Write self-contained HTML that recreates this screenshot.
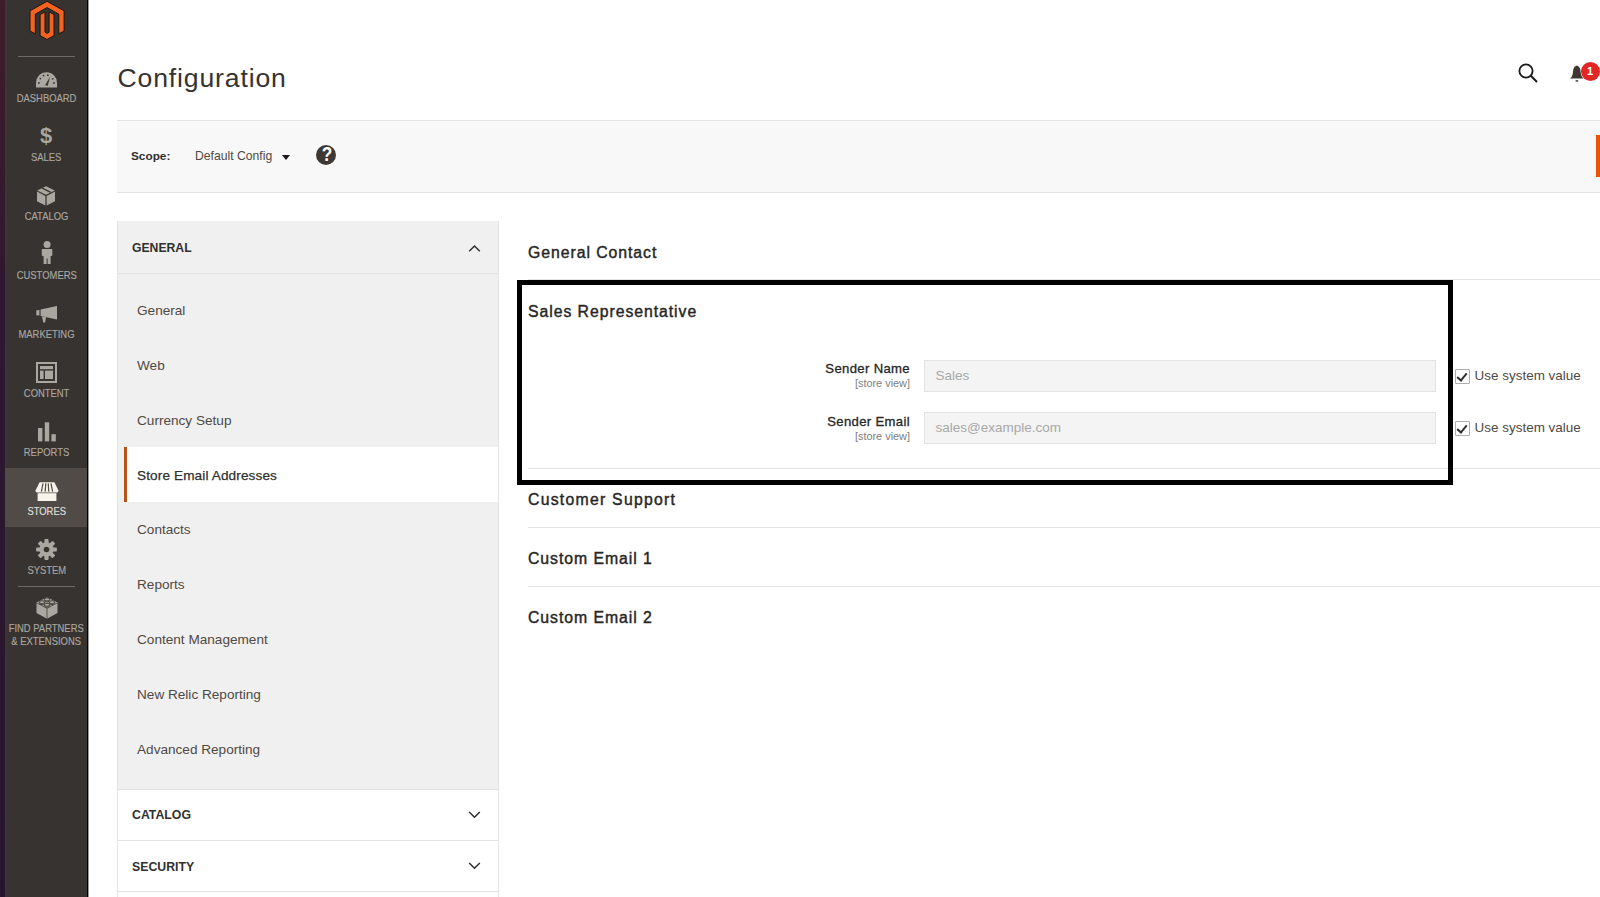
<!DOCTYPE html>
<html><head><meta charset="utf-8">
<style>
*{box-sizing:border-box;margin:0;padding:0}
html,body{width:1600px;height:897px;overflow:hidden;background:#fff;font-family:"Liberation Sans",sans-serif;position:relative}
.a{position:absolute}
.t{position:absolute;white-space:nowrap;line-height:1}
.purple{left:0;top:0;width:4.5px;height:897px;background:linear-gradient(#3f1c2b,#2d1830 35%,#27152c)}
.side{left:4.5px;top:0;width:83px;height:897px;background:#373330}
.edge{left:87px;top:0;width:1px;height:897px;background:#000}
.edge2{left:88px;top:0;width:1px;height:897px;background:#9a9a9a}
.mi{position:absolute;left:4px;width:85px;text-align:center;color:#aaa6a0;font-size:10.6px;line-height:1;white-space:nowrap}.mi span{display:inline-block;transform:scaleX(.89)}
.hl{left:5px;top:468px;width:82px;height:59px;background:#504b46}
.sep{height:1px;background:#6f6a65}
.ic{position:absolute;fill:#aaa6a0}
.nav{left:117px;top:221px;width:382px;height:676px;border-left:1px solid #e3e3e3;border-right:1px solid #e3e3e3}
.navgray{left:118px;top:221px;width:380px;height:568px;background:#f0f0f0}
.hline{height:1px;background:#e3e3e3}
.item{color:#514943;font-size:13.6px}
.sh{color:#262626;font-weight:400;font-size:15.8px;letter-spacing:0.95px;-webkit-text-stroke:0.42px #262626}
.cb{width:15px;height:15px;border:1px solid #adadad;background:#fff;border-radius:1px}
.cb::after{content:"";position:absolute;left:3px;top:1px;width:4px;height:8px;border-right:2px solid #303030;border-bottom:2px solid #303030;transform:rotate(40deg);transform-origin:50% 50%}
.lbl{font-size:13.1px;letter-spacing:0.35px;-webkit-text-stroke:0.3px #262626;color:#262626}
.mi span{-webkit-text-stroke:0.15px #aaa6a0}
</style></head><body>
<div class="a purple"></div>
<div class="a side"></div>
<div class="a" style="left:5px;top:0;width:2px;height:897px;background:#3d3438;opacity:.8"></div>
<div class="a edge"></div>
<div class="a edge2"></div>

<!-- logo -->
<svg class="a" style="left:0;top:0" width="90" height="45" viewBox="0 0 90 45">
<g fill="#f26322" stroke="#1f140e" stroke-width="1" stroke-linejoin="miter">
<path d="M47 1.3 L64.1 10.8 V31 L58.8 33.8 V14.2 L47 7.6 L35.3 14.2 V33.8 L30 31 V10.8 Z"/>
<path d="M40.1 14.6 L45 11.9 V32.2 L47 33.3 L49.1 32.2 V11.9 L54 14.6 V35.6 L47 39.5 L40.1 35.6 Z"/>
</g></svg>
<div class="a sep" style="left:18px;top:56px;width:57px"></div>

<!-- menu -->
<div class="a hl"></div>
<div class="mi" style="top:93.2px"><span>DASHBOARD</span></div>
<div class="mi" style="top:152.2px"><span>SALES</span></div>
<div class="mi" style="top:211.2px"><span>CATALOG</span></div>
<div class="mi" style="top:270.2px"><span>CUSTOMERS</span></div>
<div class="mi" style="top:329.2px"><span>MARKETING</span></div>
<div class="mi" style="top:388.2px"><span>CONTENT</span></div>
<div class="mi" style="top:447.2px"><span>REPORTS</span></div>
<div class="mi" style="top:506.2px;color:#f7f3eb"><span>STORES</span></div>
<div class="mi" style="top:565.2px"><span>SYSTEM</span></div>
<div class="a sep" style="left:18px;top:586px;width:57px"></div>
<div class="mi" style="top:623px"><span>FIND PARTNERS</span></div>
<div class="mi" style="top:635.8px"><span>&amp; EXTENSIONS</span></div>


<!-- sidebar icons -->
<svg class="a" style="left:36px;top:72px" width="21" height="16" viewBox="0.2 0 21.6 16" preserveAspectRatio="none">
<path d="M0.2 15.5 V11 A10.8 10.8 0 0 1 21.8 11 V15.5 Z" fill="#aaa6a0"/>
<g fill="#373330"><circle cx="3.2" cy="11" r="0.9"/><circle cx="4.6" cy="6.6" r="0.9"/><circle cx="8" cy="3.6" r="0.9"/><circle cx="12.4" cy="3.2" r="0.9"/><circle cx="18.7" cy="11" r="0.9"/><circle cx="17.4" cy="6.8" r="0.9"/></g>
<path d="M9.6 13.2 L14.8 4.6 L12.2 13.8 Z" fill="#373330"/>
</svg>
<div class="t" style="left:37px;top:125px;width:18px;text-align:center;font-size:22px;font-weight:700;color:#aaa6a0;line-height:22px">$</div>
<svg class="a" style="left:37px;top:185.5px" width="18" height="20" viewBox="0 0 18 20">
<path d="M9 0.2 L17.8 4.4 L9 8.8 L0.2 4.4 Z" fill="#aaa6a0"/>
<path d="M5.2 2.1 L13.8 6.4" stroke="#373330" stroke-width="1.3"/>
<path d="M0 5.6 L8.4 9.9 V19.6 L0 15.2 Z" fill="#aaa6a0"/>
<path d="M9.6 9.9 L18 5.6 V15.2 L9.6 19.6 Z" fill="#aaa6a0"/>
</svg>
<svg class="a" style="left:41px;top:240px" width="12" height="25" viewBox="0 0 12 25">
<circle cx="6.1" cy="4.4" r="3.5" fill="#aaa6a0"/>
<path d="M1.6 8.9 H10.6 Q11.3 8.9 11.3 9.6 V15.4 L9.6 16.2 V23.9 H6.6 V18.6 H5.6 V23.9 H2.6 V16.2 L0.8 15.4 V9.6 Q0.8 8.9 1.6 8.9 Z" fill="#aaa6a0"/>
</svg>
<svg class="a" style="left:36px;top:306px" width="22" height="17" viewBox="0 0 22 17">
<path d="M0.3 4.5 L3.4 3.8 V9.6 L0.3 9.2 Z" fill="#aaa6a0"/>
<path d="M4.6 3.6 L21 0 V13.4 L4.6 10 Z" fill="#aaa6a0"/>
<path d="M6 10.4 L10 11.2 L9.2 16.6 L7.2 16.4 Z" fill="#aaa6a0"/>
</svg>
<svg class="a" style="left:36px;top:361.5px" width="21" height="21" viewBox="0 0 21 21">
<rect x="1" y="1" width="19" height="19" fill="none" stroke="#aaa6a0" stroke-width="2"/>
<rect x="4" y="4" width="13" height="3.2" fill="#aaa6a0"/>
<rect x="4" y="8.6" width="3.6" height="8.4" fill="#aaa6a0"/>
<rect x="9" y="8.6" width="8" height="8.4" fill="#aaa6a0"/>
</svg>
<svg class="a" style="left:38px;top:421.5px" width="18" height="20" viewBox="0 0 18 20">
<rect x="0" y="6" width="4.4" height="13.4" fill="#aaa6a0"/>
<rect x="6.8" y="0.3" width="4.4" height="19.1" fill="#aaa6a0"/>
<rect x="13.4" y="12.2" width="4.4" height="7.2" fill="#aaa6a0"/>
</svg>
<svg class="a" style="left:34.5px;top:482px" width="24" height="20" viewBox="0 0 24 20">
<path d="M4.6 0.3 H19.4 L23.5 8.4 Q23.5 10.6 21.3 10.6 H2.7 Q0.5 10.6 0.5 8.4 Z" fill="#f7f3eb"/>
<g stroke="#504b46" stroke-width="1.2"><path d="M8 1.4 L6.4 9.6"/><path d="M10.8 1.4 L10.2 9.6"/><path d="M13.2 1.4 L13.8 9.6"/><path d="M16 1.4 L17.6 9.6"/></g>
<rect x="2.6" y="11.2" width="18.8" height="7.8" fill="#f7f3eb"/>
</svg>
<svg class="a" style="left:36px;top:539px" width="21" height="21" viewBox="-10.5 -10.5 21 21">
<g fill="#aaa6a0">
<circle r="7.2"/>
<g id="tooth"><rect x="-2.1" y="-10.4" width="4.2" height="5" rx="0.8"/></g>
<use href="#tooth" transform="rotate(45)"/><use href="#tooth" transform="rotate(90)"/><use href="#tooth" transform="rotate(135)"/>
<use href="#tooth" transform="rotate(180)"/><use href="#tooth" transform="rotate(225)"/><use href="#tooth" transform="rotate(270)"/><use href="#tooth" transform="rotate(315)"/>
</g>
<circle r="2.8" fill="#373330"/>
</svg>
<svg class="a" style="left:35.5px;top:596px" width="22" height="24" viewBox="0 0 22 24">
<path d="M11 1.2 L21.5 6.6 V17 L11 22.8 L0.5 17 V6.6 Z" fill="#aaa6a0"/>
<path d="M0.5 6.8 L11 12.4 L21.5 6.8 M11 12.4 V22.8" fill="none" stroke="#373330" stroke-width="0.7"/>
<g fill="#aaa6a0" stroke="#373330" stroke-width="0.8">
<path d="M8.4 3.4 V4.4 A2.6 1.5 0 0 0 13.6 4.4 V3.4"/><ellipse cx="11" cy="3.4" rx="2.6" ry="1.5"/>
<path d="M3.4 6.2 V7.2 A2.6 1.5 0 0 0 8.6 7.2 V6.2"/><ellipse cx="6" cy="6.2" rx="2.6" ry="1.5"/>
<path d="M13.4 6.2 V7.2 A2.6 1.5 0 0 0 18.6 7.2 V6.2"/><ellipse cx="16" cy="6.2" rx="2.6" ry="1.5"/>
<path d="M8.4 8.8 V9.8 A2.6 1.5 0 0 0 13.6 9.8 V8.8"/><ellipse cx="11" cy="8.8" rx="2.6" ry="1.5"/>
</g>
</svg>

<!-- top right -->
<svg class="a" style="left:1516px;top:62px" width="24" height="23" viewBox="0 0 24 23">
<circle cx="10" cy="9" r="6.6" fill="none" stroke="#1a1a1a" stroke-width="1.8"/>
<path d="M14.8 13.8 L21 20" stroke="#1a1a1a" stroke-width="2"/>
</svg>
<svg class="a" style="left:1569px;top:64px" width="16" height="19" viewBox="0 0 16 19">
<path d="M7.8 1.5 Q10.5 2 11.2 5 L12 10.5 Q12.6 13 14.6 14.6 H1 Q3 13 3.6 10.5 L4.4 5 Q5.1 2 7.8 1.5 Z" fill="#41362f"/>
<rect x="6.6" y="16.2" width="2.6" height="1.4" fill="#41362f"/>
</svg>
<div class="a" style="left:1580.5px;top:62px;width:19px;height:19px;border-radius:50%;background:#e22626"></div>
<div class="t" style="left:1580.5px;top:66px;width:19px;text-align:center;font-size:11px;font-weight:700;color:#fff">1</div>

<!-- chevrons -->
<svg class="a" style="z-index:2;left:468px;top:244px" width="13" height="9" viewBox="0 0 13 9"><path d="M1.2 7.3 L6.5 2 L11.8 7.3" fill="none" stroke="#303030" stroke-width="1.5"/></svg>
<svg class="a" style="z-index:2;left:468px;top:810px" width="13" height="9" viewBox="0 0 13 9"><path d="M1.2 2 L6.5 7.3 L11.8 2" fill="none" stroke="#303030" stroke-width="1.5"/></svg>
<svg class="a" style="z-index:2;left:468px;top:861px" width="13" height="9" viewBox="0 0 13 9"><path d="M1.2 2 L6.5 7.3 L11.8 2" fill="none" stroke="#303030" stroke-width="1.5"/></svg>

<!-- header -->
<div class="t" style="left:117.5px;top:64.9px;font-size:26.6px;letter-spacing:0.85px;color:#363330">Configuration</div>

<!-- scope bar -->
<div class="a" style="left:117px;top:120px;width:1483px;height:73px;background:#f8f8f8;border-top:1px solid #e3e3e3;border-bottom:1px solid #e3e3e3"></div>
<div class="t" style="left:131px;top:150.6px;font-size:11.8px;font-weight:700;color:#303030">Scope:</div>
<div class="t" style="left:195px;top:150.4px;font-size:12.2px;color:#514943">Default Config</div>
<div class="a" style="left:282px;top:155px;width:0;height:0;border-left:4px solid transparent;border-right:4px solid transparent;border-top:5px solid #1a1a1a"></div>
<div class="a" style="left:316px;top:145px;width:20px;height:20px;border-radius:50%;background:#3d3833"></div>
<div class="t" style="left:317px;top:145.4px;width:20px;text-align:center;font-size:19.5px;font-weight:700;color:#fff;transform:scaleX(.88)">?</div>
<div class="a" style="left:1596px;top:135px;width:4px;height:42px;background:#eb5202"></div>

<!-- nav -->
<div class="a nav"></div>
<div class="a navgray"></div>
<div class="t" style="left:132px;top:242px;font-size:12.2px;font-weight:700;color:#303030">GENERAL</div>
<div class="a hline" style="left:118px;top:273px;width:380px"></div>
<div class="a" style="left:124px;top:447px;width:3px;height:55px;background:#b9531a"></div>
<div class="a" style="left:127px;top:447px;width:371px;height:55px;background:#fff"></div>
<div class="t item" style="left:137px;top:303.5px">General</div>
<div class="t item" style="left:137px;top:358.5px">Web</div>
<div class="t item" style="left:137px;top:413.5px">Currency Setup</div>
<div class="t item" style="left:137px;top:468.6px;color:#303030;letter-spacing:0.12px;-webkit-text-stroke:0.25px #303030">Store Email Addresses</div>
<div class="t item" style="left:137px;top:523.3px">Contacts</div>
<div class="t item" style="left:137px;top:578.3px">Reports</div>
<div class="t item" style="left:137px;top:633.3px">Content Management</div>
<div class="t item" style="left:137px;top:688.3px">New Relic Reporting</div>
<div class="t item" style="left:137px;top:742.7px">Advanced Reporting</div>
<div class="a hline" style="left:118px;top:789px;width:380px"></div>
<div class="t" style="left:132px;top:809.4px;font-size:12.3px;font-weight:700;color:#303030">CATALOG</div>
<div class="a hline" style="left:118px;top:840px;width:380px"></div>
<div class="t" style="left:132px;top:860.8px;font-size:12.3px;font-weight:700;color:#303030">SECURITY</div>
<div class="a hline" style="left:118px;top:891px;width:380px"></div>

<!-- main -->
<div class="t sh" style="left:528px;top:244.7px">General Contact</div>
<div class="a hline" style="left:528px;top:279px;width:1072px"></div>
<div class="t sh" style="left:528px;top:303.7px">Sales Representative</div>
<div class="a hline" style="left:528px;top:468px;width:1072px"></div>
<div class="t sh" style="left:528px;top:491.9px;letter-spacing:1.25px">Customer Support</div>
<div class="a hline" style="left:528px;top:527px;width:1072px"></div>
<div class="t sh" style="left:528px;top:550.8px">Custom Email 1</div>
<div class="a hline" style="left:528px;top:586px;width:1072px"></div>
<div class="t sh" style="left:528px;top:609.7px">Custom Email 2</div>


<!-- form -->
<div class="t lbl" style="right:690px;top:362.2px">Sender Name</div>
<div class="t" style="right:690px;top:378.3px;font-size:10.9px;color:#808080">[store view]</div>
<div class="a" style="left:924px;top:360px;width:512px;height:32px;background:#f4f4f4;border:1px solid #e4e4e4"></div>
<div class="t" style="left:935.5px;top:368.5px;font-size:13.5px;color:#a8a8a8">Sales</div>
<div class="a cb" style="left:1455px;top:369px"></div>
<div class="t" style="left:1474.5px;top:368.6px;font-size:13.48px;color:#514943">Use system value</div>

<div class="t lbl" style="right:690px;top:414.7px">Sender Email</div>
<div class="t" style="right:690px;top:430.8px;font-size:10.9px;color:#808080">[store view]</div>
<div class="a" style="left:924px;top:412px;width:512px;height:32px;background:#f4f4f4;border:1px solid #e4e4e4"></div>
<div class="t" style="left:935.5px;top:420.6px;font-size:13.5px;color:#a8a8a8">sales@example.com</div>
<div class="a cb" style="left:1455px;top:421px"></div>
<div class="t" style="left:1474.5px;top:420.6px;font-size:13.48px;color:#514943">Use system value</div>

<div class="a" style="left:517px;top:280px;width:936px;height:205px;border:5px solid #000"></div>
</body></html>
